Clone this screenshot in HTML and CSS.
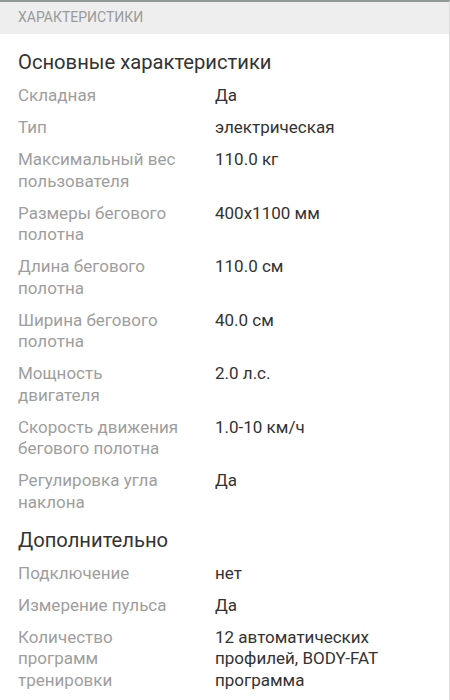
FILE: index.html
```html
<!DOCTYPE html>
<html lang="ru">
<head>
    <meta charset="UTF-8">
    <meta name="viewport" content="width=device-width, initial-scale=1.0">
    <title>Характеристики</title>
    <link rel="stylesheet" href="styles.css">
</head>
<body>

  <div class="page">
    <div class="tab-header">ХАРАКТЕРИСТИКИ</div>

    <div class="group">
      <h2 class="group-title">Основные характеристики</h2>
      <div class="row"><div class="label">Складная</div><div class="value">Да</div></div>
      <div class="row"><div class="label">Тип</div><div class="value">электрическая</div></div>
      <div class="row"><div class="label">Максимальный вес пользователя</div><div class="value">110.0 кг</div></div>
      <div class="row"><div class="label">Размеры бегового полотна</div><div class="value">400x1100 мм</div></div>
      <div class="row"><div class="label">Длина бегового полотна</div><div class="value">110.0 см</div></div>
      <div class="row"><div class="label">Ширина бегового полотна</div><div class="value">40.0 см</div></div>
      <div class="row"><div class="label">Мощность двигателя</div><div class="value">2.0 л.с.</div></div>
      <div class="row"><div class="label">Скорость движения бегового полотна</div><div class="value">1.0-10 км/ч</div></div>
      <div class="row"><div class="label">Регулировка угла наклона</div><div class="value">Да</div></div>
    </div>

    <div class="group">
      <h2 class="group-title">Дополнительно</h2>
      <div class="row"><div class="label">Подключение</div><div class="value">нет</div></div>
      <div class="row"><div class="label">Измерение пульса</div><div class="value">Да</div></div>
      <div class="row"><div class="label">Количество программ тренировки</div><div class="value">12 автоматических профилей, BODY-FAT программа</div></div>
    </div>
  </div>

</body>
</html>
```

FILE: styles.css
```css
body {
  margin: 0;
  background-color: #fff;
  font-family: Roboto, "Noto Sans", sans-serif;
  color: #333;
}

.page {
  border-top: 2px solid #8f9c95;
  border-right: 1px solid #ddd;
  min-height: 698px;
}

.tab-header {
  background-color: #eeeeee;
  color: #9a9a9a;
  font-size: 14px;
  height: 32px;
  line-height: 31px;
  padding-left: 18px;
}

.group {
  padding: 0 18px;
}

.group-title {
  font-size: 20.2px;
  font-weight: 400;
  color: #333;
  margin: 0;
  line-height: 28px;
}

.tab-header + .group .group-title {
  margin-top: 14px;
  margin-bottom: 9px;
}

.group + .group .group-title {
  margin-top: 2px;
  margin-bottom: 9px;
}

.row {
  display: grid;
  grid-template-columns: 197px 1fr;
  font-size: 17px;
  line-height: 21.5px;
  padding-bottom: 10.5px;
}

.label {
  color: #9e9e9e;
  padding-right: 32px;
}

.value {
  color: #333;
}
```
